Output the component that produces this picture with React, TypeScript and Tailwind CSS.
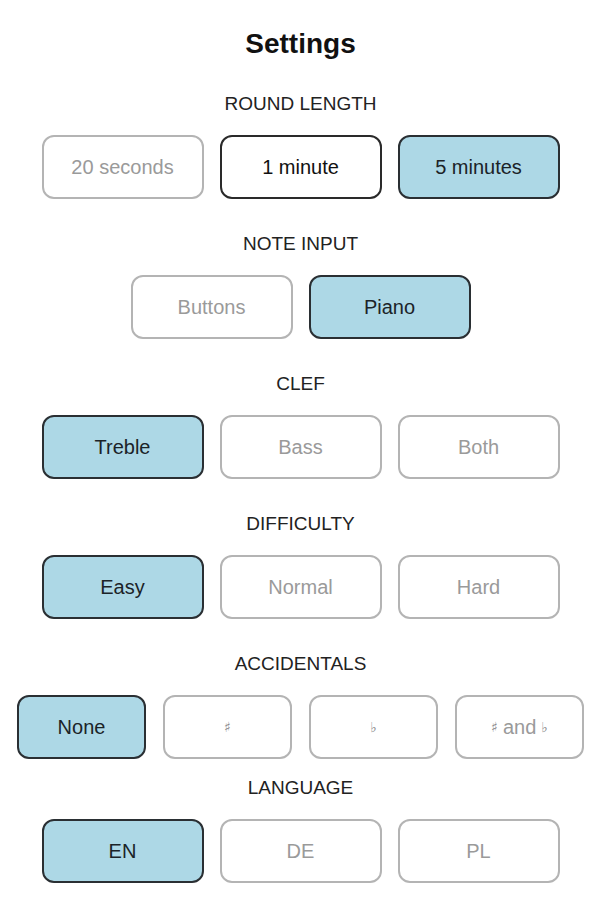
import React, { useState } from 'react';

type Opt = { value: string; label: React.ReactNode };

const glyph = 'text-[14px] font-["DejaVu_Sans",sans-serif] text-[#8a8a8a]';

function OptionRow({
  options,
  selected,
  hovered,
  onSelect,
  narrow,
}: {
  options: Opt[];
  selected: string;
  hovered?: string;
  onSelect: (v: string) => void;
  narrow?: boolean;
}) {
  return (
    <div className={`flex justify-center pl-[2px] ${narrow ? 'gap-[17px]' : 'gap-[16px]'}`}>
      {options.map((o) => {
        const isSel = o.value === selected;
        const isHover = o.value === hovered;
        return (
          <button
            key={o.value}
            onClick={() => onSelect(o.value)}
            className={`${narrow ? 'w-[129px]' : 'w-[162px]'} h-[64px] rounded-[12px] text-[20px] flex items-center justify-center ${
              isSel
                ? 'bg-[#add8e6] border-2 border-[#2a2f33] text-[#1b2328]'
                : isHover
                ? 'bg-white border-2 border-[#2a2a2a] text-[#111]'
                : 'bg-white border-2 border-[#b4b4b4] text-[#9a9a9a]'
            }`}
          >
            {o.label}
          </button>
        );
      })}
    </div>
  );
}

function Label({ children, className = '' }: { children: React.ReactNode; className?: string }) {
  return (
    <div className={`h-6 leading-6 text-center pl-[2px] text-[19px] text-[#222] uppercase ${className}`}>{children}</div>
  );
}

export default function App() {
  const [round, setRound] = useState('5m');
  const [input, setInput] = useState('piano');
  const [clef, setClef] = useState('treble');
  const [difficulty, setDifficulty] = useState('easy');
  const [accidentals, setAccidentals] = useState('none');
  const [lang, setLang] = useState('en');

  return (
    <div className="w-[599px] min-h-[900px] bg-white mx-auto flex flex-col font-['Liberation_Sans',Arial,sans-serif]">
      <h1 className="mt-[28px] h-8 leading-8 text-center pl-[2px] text-[28px] font-bold text-[#111]">Settings</h1>

      <Label className="mt-[32px]">Round length</Label>
      <div className="mt-[19px]">
        <OptionRow
          options={[
            { value: '20s', label: '20 seconds' },
            { value: '1m', label: '1 minute' },
            { value: '5m', label: '5 minutes' },
          ]}
          selected={round}
          hovered="1m"
          onSelect={setRound}
        />
      </div>

      <Label className="mt-[33px]">Note input</Label>
      <div className="mt-[19px]">
        <OptionRow
          options={[
            { value: 'buttons', label: 'Buttons' },
            { value: 'piano', label: 'Piano' },
          ]}
          selected={input}
          onSelect={setInput}
        />
      </div>

      <Label className="mt-[33px]">Clef</Label>
      <div className="mt-[19px]">
        <OptionRow
          options={[
            { value: 'treble', label: 'Treble' },
            { value: 'bass', label: 'Bass' },
            { value: 'both', label: 'Both' },
          ]}
          selected={clef}
          onSelect={setClef}
        />
      </div>

      <Label className="mt-[33px]">Difficulty</Label>
      <div className="mt-[19px]">
        <OptionRow
          options={[
            { value: 'easy', label: 'Easy' },
            { value: 'normal', label: 'Normal' },
            { value: 'hard', label: 'Hard' },
          ]}
          selected={difficulty}
          onSelect={setDifficulty}
        />
      </div>

      <Label className="mt-[33px]">Accidentals</Label>
      <div className="mt-[19px]">
        <OptionRow
          narrow
          options={[
            { value: 'none', label: 'None' },
            { value: 'sharp', label: <span className={glyph}>♯</span> },
            { value: 'flat', label: <span className={glyph}>♭</span> },
            {
              value: 'both',
              label: (
                <span className="flex items-center gap-[5px]">
                  <span className={glyph}>♯</span>
                  <span>and</span>
                  <span className={glyph}>♭</span>
                </span>
              ),
            },
          ]}
          selected={accidentals}
          onSelect={setAccidentals}
        />
      </div>

      <Label className="mt-[17px]">Language</Label>
      <div className="mt-[19px]">
        <OptionRow
          options={[
            { value: 'en', label: 'EN' },
            { value: 'de', label: 'DE' },
            { value: 'pl', label: 'PL' },
          ]}
          selected={lang}
          onSelect={setLang}
        />
      </div>
    </div>
  );
}
